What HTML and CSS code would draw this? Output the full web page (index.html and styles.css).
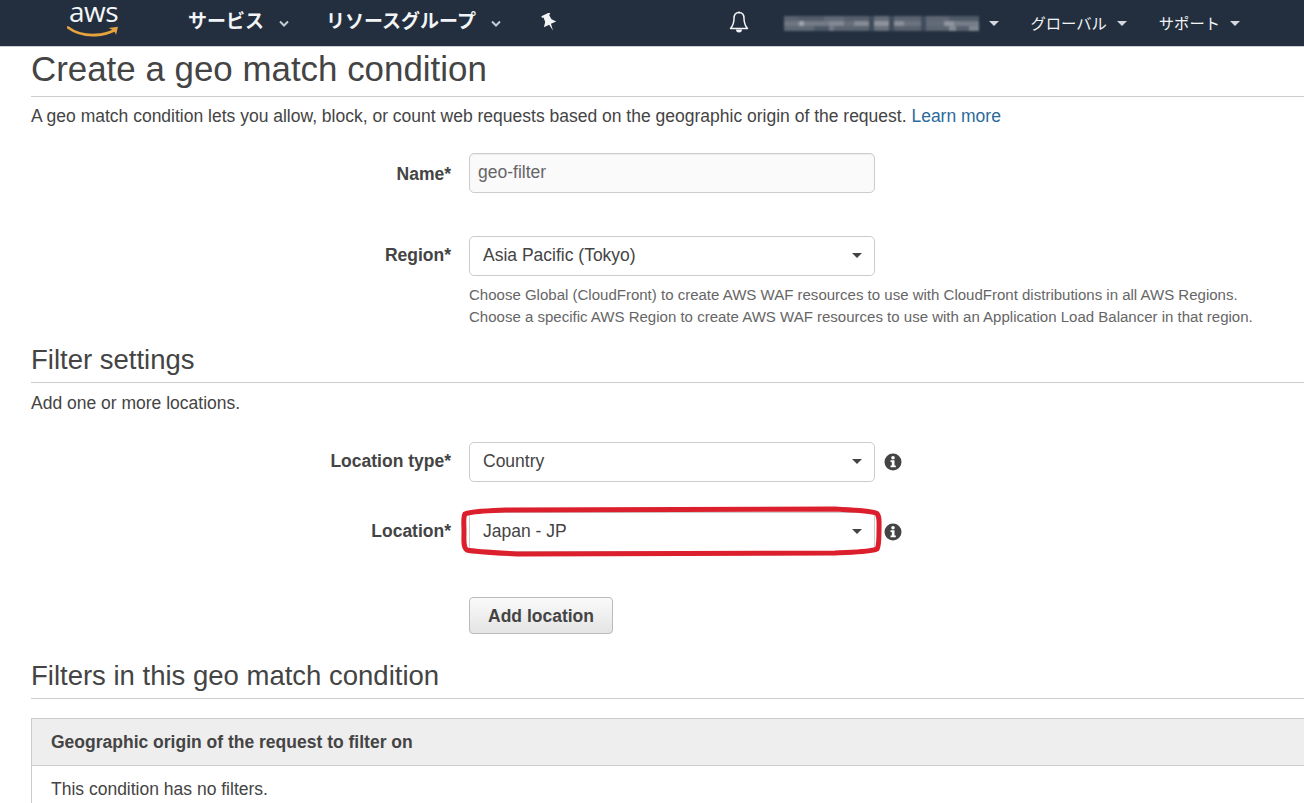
FILE: index.html
```html
<!DOCTYPE html>
<html lang="en">
<head>
<meta charset="utf-8">
<title>Create a geo match condition</title>
<link rel="stylesheet" href="styles.css">
</head>
<body>
<header class="topbar">
  <div class="logo">
    <span class="logo-text">aws</span>
    <svg class="logo-smile" width="53" height="12" viewBox="0 0 53 12"><path d="M1 1.500C9 7.500 20 9.500 29 9 36 8.700 42 7 47 4.500" fill="none" stroke="#e8a33d" stroke-width="2.800" stroke-linecap="round"/><path d="M41.500 2 51 .8 49 9C48.700 6.700 46.500 3.700 41.500 2Z" fill="#e8a33d"/></svg>
  </div>
  <nav class="nav-main">
    <a class="nav-item services">サービス<svg class="chevron" width="10" height="7" viewBox="0 0 10 7"><path d="M1 1.500 5 5.500 9 1.500" fill="none" stroke="#c6ccd4" stroke-width="2"/></svg></a>
    <a class="nav-item groups">リソースグループ<svg class="chevron" width="10" height="7" viewBox="0 0 10 7"><path d="M1 1.500 5 5.500 9 1.500" fill="none" stroke="#c6ccd4" stroke-width="2"/></svg></a>
    <svg class="pin" width="18" height="18" viewBox="-9 -9 18 18"><path transform="rotate(-25)" d="M-4.500 -8.500H4.500V-6.500H3L3.500 -1.500 6.800 2.500H1L0 9.500-1 2.500H-6.800L-3.500 -1.500-3 -6.500H-4.500Z" fill="#f2f4f6"/></svg>
  </nav>
  <div class="nav-right">
    <svg class="bell" width="20" height="22" viewBox="0 0 20 22"><path d="M10 1.500C6.500 1.500 5 4 5 7.500 5 11.500 4.500 14 1.500 17.500H18.500C15.500 14 15 11.500 15 7.500 15 4 13.500 1.500 10 1.500Z" fill="none" stroke="#f2f4f6" stroke-width="1.500" stroke-linejoin="round"/><path d="M7 18.500A3 3 0 0 0 13 18.500Z" fill="#f2f4f6"/><circle cx="10" cy="1.500" r="1" fill="#f2f4f6"/></svg>
    <div class="account">
      <span class="mosaic"></span>
      <i class="caret"></i>
    </div>
    <a class="nav-util global">グローバル<i class="caret"></i></a>
    <a class="nav-util">サポート<i class="caret"></i></a>
  </div>
</header>

<main class="page">
  <h1 class="title">Create a geo match condition</h1>
  <p class="lead">A geo match condition lets you allow, block, or count web requests based on the geographic origin of the request. <a class="link">Learn more</a></p>

  <div class="row row-name">
    <label class="label">Name*</label>
    <div class="control input-disabled">geo-filter</div>
  </div>

  <div class="row row-region">
    <label class="label">Region*</label>
    <div class="control select">Asia Pacific (Tokyo)<i class="select-caret"></i></div>
  </div>
  <div class="help">
    <p>Choose Global (CloudFront) to create AWS WAF resources to use with CloudFront distributions in all AWS Regions.</p>
    <p>Choose a specific AWS Region to create AWS WAF resources to use with an Application Load Balancer in that region.</p>
  </div>

  <h2 class="section section-filter">Filter settings</h2>
  <p class="sub">Add one or more locations.</p>

  <div class="row row-type">
    <label class="label">Location type*</label>
    <div class="control select">Country<i class="select-caret"></i></div>
    <svg class="info" width="18" height="18" viewBox="0 0 18 18"><circle cx="9" cy="9" r="8.500" fill="#444"/><circle cx="9" cy="4.700" r="1.800" fill="#fff"/><path d="M6.500 7.300H10.500V12.400H11.800V14.200H6.500V12.400H7.800V9.100H6.500Z" fill="#fff"/></svg>
  </div>

  <div class="row row-location">
    <label class="label">Location*</label>
    <div class="control select">Japan - JP<i class="select-caret"></i>
      <svg class="mark" width="423" height="52" viewBox="0 0 423 52"><path d="M5 8C12 5 28 5 45 4L375 3C395 4 410 5 416 7 420 9 419 16 419 25 419 33 419 40 417 43 410 46 395 46 375 47L60 48C40 47 15 46 7 44 3 42 4 33 4 25 4 18 3 11 5 8Z" fill="none" stroke="#dc1f2d" stroke-width="5"/></svg>
    </div>
    <svg class="info" width="18" height="18" viewBox="0 0 18 18"><circle cx="9" cy="9" r="8.500" fill="#444"/><circle cx="9" cy="4.700" r="1.800" fill="#fff"/><path d="M6.500 7.300H10.500V12.400H11.800V14.200H6.500V12.400H7.800V9.100H6.500Z" fill="#fff"/></svg>
  </div>

  <div class="row row-button">
    <button class="btn" type="button">Add location</button>
  </div>

  <h2 class="section section-list">Filters in this geo match condition</h2>
  <div class="table">
    <div class="table-head">Geographic origin of the request to filter on</div>
    <div class="table-body">This condition has no filters.</div>
  </div>
</main>
</body>
</html>
```
FILE: styles.css
```css
* { box-sizing: border-box; }
html, body { margin: 0; padding: 0; height: 803px; overflow: hidden; }
body { background: #fff; color: #444; font-family: "Liberation Sans", Arial, sans-serif; font-size: 17.5px; }
p { margin: 0; }

.topbar { height: 47px; background: #232f3e; border-bottom: 1px solid #c9ccd0; display: flex; align-items: center; font-family: "Noto Sans CJK JP", "Noto Sans", sans-serif; color: #f2f4f6; }
.logo { margin-left: 69px; width: 52px; height: 38px; position: relative; align-self: flex-start; }
.logo-text { display: block; font-family: "Open Sans", sans-serif; font-size: 28px; line-height: 22px; letter-spacing: -.5px; color: #f4f6f8; }
.logo-smile { position: absolute; left: -2px; top: 26px; }
.nav-main { display: flex; align-items: center; margin-left: 67px; }
.nav-item { display: flex; align-items: center; font-size: 19px; font-weight: 700; line-height: 24px; margin-top: -7px; }
.chevron { margin-left: 15px; margin-top: 8px; }
.services { margin-right: 37px; }
.groups { margin-right: 39px; }
.pin { margin-top: -3px; }
.nav-right { display: flex; align-items: center; margin-left: auto; padding-right: 64px; }
.bell { margin-right: 35px; margin-top: -2px; }
.account { display: flex; align-items: center; margin-right: 31px; }
.mosaic { display: block; width: 195px; height: 15px; filter: blur(.8px); background-repeat: no-repeat; background-size: 100% 5px; background-position: 0 0, 0 5px, 0 10px; background-image:
  linear-gradient(90deg, #5a6370 0 15px, #525c69 15px 40px, #5f6875 40px 60px, #555f6c 60px 85px, #3f4b5b 85px 90px, #646c78 90px 105px, #3f4b5b 105px 110px, #5a6370 110px 137px, #3f4b5b 137px 142px, #5e6673 142px 165px, #4f5a67 165px 195px),
  linear-gradient(90deg, #6f7783 0 15px, #a0a5ad 15px 20px, #747c88 20px 45px, #828995 45px 60px, #666f7c 60px 70px, #858c96 70px 85px, #3f4b5b 85px 90px, #8e949d 90px 105px, #3f4b5b 105px 110px, #8a909a 110px 120px, #6b7380 120px 137px, #3f4b5b 137px 142px, #626b78 142px 160px, #8f959e 160px 170px, #757d89 170px 195px),
  linear-gradient(90deg, #5f6875 0 30px, #4c5765 30px 45px, #727985 45px 50px, #5a6370 50px 85px, #3f4b5b 85px 90px, #68707c 90px 105px, #3f4b5b 105px 110px, #57606d 110px 137px, #3f4b5b 137px 142px, #5b6471 142px 165px, #838a94 165px 172px, #57606d 172px 185px, #7f8690 185px 195px); }
.caret { display: inline-block; width: 0; height: 0; margin-left: 10px; border-left: 5px solid transparent; border-right: 5px solid transparent; border-top: 5px solid #d5d9de; }
.nav-util { display: flex; align-items: center; font-size: 15.300px; line-height: 20px; margin-right: 32px; margin-top: -2px; }
.nav-util:last-child { margin-right: 0; }
.nav-util .caret { margin-left: 10px; margin-top: 2px; }

.page { padding-left: 31px; }
.title { margin: 0; height: 50px; font-size: 34.900px; font-weight: 400; line-height: 44px; border-bottom: 1px solid #ccc; }
.lead { margin-top: 8px; line-height: 22px; }
.link { color: #2b6a9c; }

.row { display: flex; align-items: center; height: 40px; }
.label { width: 420px; text-align: right; font-weight: 700; margin-right: 18px; flex: none; }
.control { width: 406px; height: 40px; border: 1px solid #ccc; border-radius: 5px; display: flex; align-items: center; position: relative; background: #fff; flex: none; }
.input-disabled { background: #fafafa; color: #666; padding: 0 8px; box-shadow: inset 0 1px 1px rgba(0,0,0,.06); padding-bottom: 1px; }
.select { padding-left: 13px; padding-bottom: 2px; }
.select-caret { position: absolute; right: 12px; top: 16px; width: 0; height: 0; border-left: 5.500px solid transparent; border-right: 5.500px solid transparent; border-top: 5.500px solid #444; }
.info { margin-left: 9px; flex: none; }
.mark { position: absolute; left: -10px; top: -7px; pointer-events: none; }

.row-name { margin-top: 26px; }
.row-name .label { padding-top: 2px; }
.row-region { margin-top: 43px; }
.row-region .label, .row-type .label, .row-location .label { padding-bottom: 2px; }
.help { margin-left: 438px; margin-top: 8px; font-size: 15.020px; line-height: 22px; color: #666; white-space: nowrap; }
.section { margin: 0; font-size: 27.500px; font-weight: 400; line-height: 36px; border-bottom: 1px solid #ccc; height: 44px; padding-top: 3px; }
.section-filter { margin-top: 11px; }
.sub { margin-top: 9px; line-height: 22px; }
.row-type { margin-top: 28px; }
.row-location { margin-top: 30px; }
.row-button { margin-top: 45px; height: 37px; padding-left: 438px; }
.btn { width: 144px; height: 37px; border: 1px solid #bbb; border-radius: 4px; background: linear-gradient(#fafafa, #e4e4e4); color: #444; font: 700 17.500px "Liberation Sans", Arial, sans-serif; padding: 2px 0 0; }
.section-list { margin-top: 21px; }
.table { margin-top: 19px; border: 1px solid #ccc; border-right: 0; border-bottom: 0; }
.table-head { height: 47px; background: #eee; border-bottom: 1px solid #ccc; font-weight: 700; display: flex; align-items: center; padding-left: 19px; }
.table-body { padding: 12px 19px; line-height: 22px; }
```
